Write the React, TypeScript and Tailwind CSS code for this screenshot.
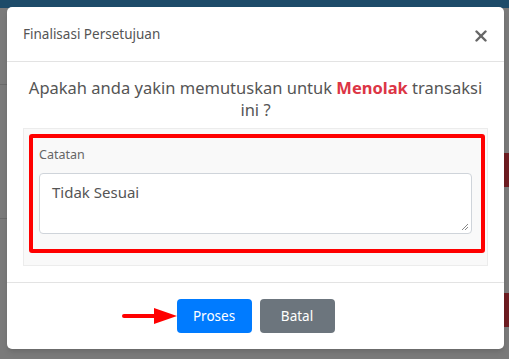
import React from 'react';

const font = { fontFamily: '"Noto Sans", "Open Sans", sans-serif' };

export default function App() {
  return (
    <div className="relative w-[509px] h-[359px] overflow-hidden bg-[#7a7a7a]" style={font}>
      {/* dimmed page behind the modal */}
      <div className="h-[8px] bg-[#1d4b69]"></div>
      <div className="absolute left-0 top-[84px] w-[7px] h-px bg-[#6a6a6a]"></div>
      <div className="absolute left-0 top-[218px] w-[7px] h-px bg-[#6a6a6a]"></div>
      <div className="absolute right-0 top-[153px] w-[5px] h-[34px] bg-[#6e1d22]"></div>
      <div className="absolute right-0 top-[293px] w-[5px] h-[34px] bg-[#6e1d22]"></div>

      {/* modal */}
      <div className="absolute left-[7px] top-[7px] w-[497px] h-[342px] bg-white rounded-[5px] shadow-md flex flex-col">
        <div className="h-[55px] px-4 flex items-center justify-between border-b border-[#e3e3e3]">
          <span className="text-[13.5px] text-[#555] pt-[1px]">Finalisasi Persetujuan</span>
          <svg className="mr-[1px] mt-[4px]" width="12" height="12" viewBox="0 0 12 12">
            <line x1="1.5" y1="1.5" x2="10.5" y2="10.5" stroke="#666" strokeWidth="2.4" strokeLinecap="round" />
            <line x1="10.5" y1="1.5" x2="1.5" y2="10.5" stroke="#666" strokeWidth="2.4" strokeLinecap="round" />
          </svg>
        </div>

        <div className="flex-1 px-4 pt-[15px]">
          <p className="text-center text-[16.5px] leading-[22px] text-[#555]">
            Apakah anda yakin memutuskan untuk <span className="font-bold text-[#dc3545]">Menolak</span> transaksi ini ?
          </p>
          <div className="mt-[7px] bg-[#f9f9f9] border border-[#ececec] pt-[5px] pl-[5px] pr-[2px] pb-[12px]">
            <div className="border-[4px] border-[#ff0000] rounded-[3px] pl-[6px] pr-[9px] pt-[8px] pb-[15px]">
              <div className="text-[12.5px] text-[#666] leading-[18px]">Catatan</div>
              <div className="relative mt-[9px] h-[61px] bg-white border border-[#cfd4da] rounded-[4px] px-[12px] pt-[7px] text-[15px] text-[#555]">
                Tidak Sesuai
                <svg className="absolute right-[2px] bottom-[2px]" width="8" height="8" viewBox="0 0 8 8">
                  <line x1="7" y1="1" x2="1" y2="7" stroke="#888" strokeWidth="1" />
                  <line x1="7" y1="4" x2="4" y2="7" stroke="#888" strokeWidth="1" />
                </svg>
              </div>
            </div>
          </div>
        </div>

        <div className="relative h-[67px] border-t border-[#e3e3e3] flex items-center justify-center gap-[8px]">
          <svg className="absolute left-[115px] top-[23px]" width="56" height="20" viewBox="0 0 56 20">
            <line x1="2" y1="10" x2="36" y2="10" stroke="#ff0000" strokeWidth="4" strokeLinecap="round" />
            <polygon points="32,2 55,10 32,18" fill="#ff0000" />
          </svg>
          <button className="w-[75px] h-[34px] rounded-[4px] bg-[#007bff] text-white text-[13.5px]">Proses</button>
          <button className="w-[75px] h-[34px] rounded-[4px] bg-[#6c757d] text-white text-[13.5px]">Batal</button>
        </div>
      </div>
    </div>
  );
}
